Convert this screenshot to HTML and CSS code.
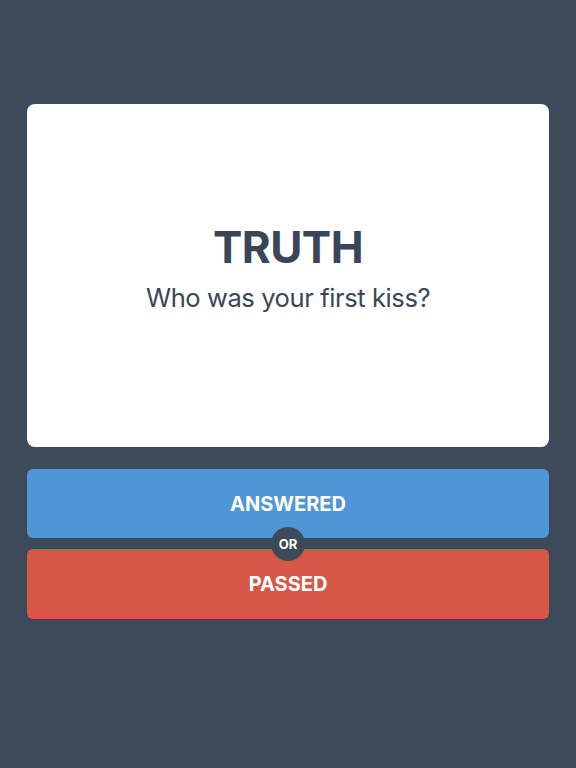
FILE: index.html
```html
<!DOCTYPE html>
<html lang="en">
<head>
    <meta charset="UTF-8">
    <meta name="viewport" content="width=device-width, initial-scale=1.0">
    <title>Truth or Dare</title>
    <link rel="stylesheet" href="styles.css">
</head>
<body>
    <div id="app">
        <div class="card">
            <div class="card-type">TRUTH</div>
            <div class="card-text">Who was your first kiss?</div>
        </div>

        <div class="actions">
            <button class="btn btn-answered">ANSWERED</button>
            <button class="btn btn-passed">PASSED</button>
            <div class="or-badge">OR</div>
        </div>
    </div>
</body>
</html>
```

FILE: styles.css
```css
body {
    font-family: Inter, "Liberation Sans", sans-serif;
    margin: 0;
    background: #3d4a5a;
    min-height: 100vh;
}

#app {
    padding: 104px 27px 0;
    display: flex;
    flex-direction: column;
}

.card {
    background: white;
    border-radius: 8px;
    height: 343px;
    display: flex;
    flex-direction: column;
    justify-content: center;
    align-items: center;
    color: #3a4658;
    padding-bottom: 15px;
    box-sizing: border-box;
}

.card-type {
    font-size: 44px;
    font-weight: 700;
    line-height: 50px;
    letter-spacing: -0.5px;
}

.card-text {
    font-size: 25.5px;
    line-height: 32px;
    letter-spacing: -0.4px;
    margin-top: 10px;
}

.actions {
    position: relative;
    margin-top: 22px;
    display: flex;
    flex-direction: column;
    gap: 11px;
}

.btn {
    font-family: inherit;
    border: none;
    border-radius: 6px;
    height: 70px;
    color: white;
    font-size: 20px;
    font-weight: 700;
    cursor: pointer;
    padding: 0;
}

.btn-answered {
    background: #5096d6;
    height: 69px;
}

.btn-passed {
    background: #d65746;
}

.or-badge {
    position: absolute;
    left: 50%;
    top: 58px;
    transform: translateX(-50%);
    width: 34px;
    height: 34px;
    border-radius: 50%;
    background: #3d4a5a;
    color: white;
    font-size: 13px;
    font-weight: 700;
    display: flex;
    align-items: center;
    justify-content: center;
}
```
